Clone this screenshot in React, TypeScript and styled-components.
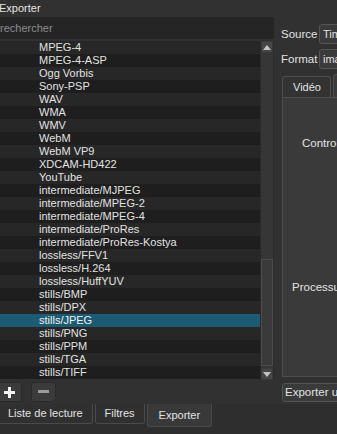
import React from 'react'
import styled, { createGlobalStyle, css } from 'styled-components'

const GlobalStyle = createGlobalStyle`
  html, body {
    margin: 0;
    padding: 0;
    background: #2f2f2f;
  }
  body {
    font-family: "Liberation Sans", Arial, sans-serif;
    font-size: 11px;
    color: #dcdcdc;
  }
`

const presets = [
  'MPEG-4',
  'MPEG-4-ASP',
  'Ogg Vorbis',
  'Sony-PSP',
  'WAV',
  'WMA',
  'WMV',
  'WebM',
  'WebM VP9',
  'XDCAM-HD422',
  'YouTube',
  'intermediate/MJPEG',
  'intermediate/MPEG-2',
  'intermediate/MPEG-4',
  'intermediate/ProRes',
  'intermediate/ProRes-Kostya',
  'lossless/FFV1',
  'lossless/H.264',
  'lossless/HuffYUV',
  'stills/BMP',
  'stills/DPX',
  'stills/JPEG',
  'stills/PNG',
  'stills/PPM',
  'stills/TGA',
  'stills/TIFF'
]

const Window = styled.div`
  width: 337px;
  height: 434px;
  overflow: hidden;
  display: flex;
  flex-direction: column;
  background: #313131;
`

const Main = styled.div`
  display: flex;
  height: 404px;
  flex-shrink: 0;
`

const LeftDock = styled.div`
  width: 276px;
  flex-shrink: 0;
  display: flex;
  flex-direction: column;
`

const DockTitle = styled.div`
  height: 17px;
  line-height: 16px;
  margin-left: -1px;
  color: #e4e4e4;
`

const SearchField = styled.div`
  height: 22px;
  line-height: 22px;
  margin-right: 2px;
  background: #252525;
  color: #8c8c8c;
  white-space: nowrap;
`

const ListView = styled.div`
  margin-top: 2px;
  height: 339px;
  width: 274px;
  display: flex;
`

const Rows = styled.div`
  width: 260px;
  display: flex;
  flex-direction: column;
`

const Row = styled.div<{ $odd: boolean; $selected: boolean }>`
  height: 13px;
  line-height: 13px;
  padding-left: 39px;
  white-space: nowrap;
  color: #e2e2e2;
  background: ${({ $odd }) => ($odd ? '#1e1e1e' : '#272727')};
  ${({ $selected }) =>
    $selected &&
    css`
      background: #1c5b74;
      color: #f0f0f0;
    `}
`

const ScrollBar = styled.div`
  width: 14px;
  display: flex;
  flex-direction: column;
  background: #363636;
  box-sizing: border-box;
  border-left: 1px solid #2a2a2a;
  border-right: 1px solid #2c2c2c;
`

const ArrowButton = styled.div`
  height: 12px;
  display: flex;
  align-items: center;
  justify-content: center;
  background: #464646;
  border: 1px solid #3a3a3a;
  box-sizing: border-box;
`

const Thumb = styled.div`
  margin-top: auto;
  height: 107px;
  margin-bottom: 2px;
  background: #3a3a3a;
  border: 1px solid #4c4c4c;
  box-sizing: border-box;
`

const ButtonRow = styled.div`
  height: 24px;
  padding-top: 2px;
  box-sizing: border-box;
  display: flex;
  gap: 9px;
`

const ToolButton = styled.div<{ $first?: boolean }>`
  width: 25px;
  height: 20px;
  margin-left: ${({ $first }) => ($first ? '-3px' : '0')};
  border-radius: 3px;
  background: #3b3b3b;
  border: 1px solid #2a2a2a;
  box-sizing: border-box;
  display: flex;
  align-items: center;
  justify-content: center;
`

const RightPanel = styled.div`
  flex: 1;
  min-width: 0;
  padding: 24px 0 0 5px;
  display: flex;
  flex-direction: column;
  white-space: nowrap;
`

const FormRow = styled.div`
  display: flex;
  align-items: center;
  height: 20px;
  margin-bottom: 5px;
`

const Label = styled.div`
  width: 38px;
  flex-shrink: 0;
  color: #e2e2e2;
  font-size: 11.5px;
`

const Combo = styled.div`
  width: 90px;
  flex-shrink: 0;
  height: 20px;
  line-height: 18px;
  padding-left: 3px;
  box-sizing: border-box;
  border-radius: 3px;
  background: #3a3a3a;
  border: 1px solid #555;
  color: #e2e2e2;
`

const TabRow = styled.div`
  display: flex;
  align-items: flex-end;
  height: 24px;
  margin-left: 1px;
  gap: 2px;
`

const TopTab = styled.div<{ $selected?: boolean }>`
  flex-shrink: 0;
  height: ${({ $selected }) => ($selected ? '24px' : '22px')};
  line-height: 21px;
  padding: 0 10px;
  box-sizing: border-box;
  border: 1px solid #4e4e4e;
  border-bottom: none;
  border-radius: 3px 3px 0 0;
  background: ${({ $selected }) => ($selected ? '#3b3b3b' : '#333')};
  color: #e2e2e2;
  width: ${({ $selected }) => ($selected ? '60px' : '49px')};
  text-align: center;
`

const TabPanel = styled.div`
  margin-left: 1px;
  height: 280px;
  width: 100px;
  margin-top: -1px;
  box-sizing: border-box;
  border: 1px solid #4e4e4e;
  background: #3a3a3a;
  display: flex;
  flex-direction: column;
`

const PanelLabel = styled.div<{ $indent: number; $top: number }>`
  margin-top: ${({ $top }) => $top}px;
  padding-left: ${({ $indent }) => $indent}px;
  height: 13px;
  line-height: 13px;
  color: #e2e2e2;
  font-size: 11.5px;
`

const ExportButton = styled.div`
  margin: 6px 0 0 1px;
  width: 100px;
  height: 19px;
  line-height: 17px;
  padding-left: 2px;
  box-sizing: border-box;
  border-radius: 3px;
  background: #3a3a3a;
  border: 1px solid #555;
  color: #e2e2e2;
  font-size: 11.5px;
`

const BottomBar = styled.div`
  height: 30px;
  flex-shrink: 0;
  display: flex;
  align-items: flex-start;
  gap: 2px;
  background: #2e2e2e;
`

const BottomTab = styled.div<{ $selected?: boolean; $first?: boolean }>`
  height: ${({ $selected }) => ($selected ? '23px' : '20px')};
  line-height: 18px;
  padding: ${({ $selected }) => ($selected ? '2px 11px 0' : '0 9px')};
  margin-left: ${({ $first }) => ($first ? '-2px' : '0')};
  box-sizing: border-box;
  border: 1px solid #4a4a4a;
  border-top: none;
  border-radius: 0 0 3px 3px;
  background: ${({ $selected }) => ($selected ? '#393939' : '#303030')};
  color: #e2e2e2;
  font-size: 11px;
  white-space: nowrap;
`

function Triangle({ up }: { up: boolean }) {
  return (
    <svg width="8" height="5" viewBox="0 0 8 5">
      <polygon points={up ? '0,5 8,5 4,0' : '0,0 8,0 4,5'} fill="#c4c4c4" />
    </svg>
  )
}

function PlusIcon() {
  return (
    <svg width="11" height="11" viewBox="0 0 11 11">
      <rect x="4" y="0" width="3" height="11" fill="#f2f2f2" />
      <rect x="0" y="4" width="11" height="3" fill="#f2f2f2" />
    </svg>
  )
}

function MinusIcon() {
  return (
    <svg width="11" height="4" viewBox="0 0 11 4">
      <rect x="0" y="0" width="11" height="3" fill="#9a9a9a" />
    </svg>
  )
}

export default function App() {
  return (
    <>
      <GlobalStyle />
      <Window>
        <Main>
          <LeftDock>
            <DockTitle>Exporter</DockTitle>
            <SearchField>rechercher</SearchField>
            <ListView>
              <Rows>
                {presets.map((name, i) => (
                  <Row key={name} $odd={i % 2 === 1} $selected={name === 'stills/JPEG'}>
                    {name}
                  </Row>
                ))}
              </Rows>
              <ScrollBar>
                <ArrowButton>
                  <Triangle up />
                </ArrowButton>
                <Thumb />
                <ArrowButton>
                  <Triangle up={false} />
                </ArrowButton>
              </ScrollBar>
            </ListView>
            <ButtonRow>
              <ToolButton $first>
                <PlusIcon />
              </ToolButton>
              <ToolButton>
                <MinusIcon />
              </ToolButton>
            </ButtonRow>
          </LeftDock>
          <RightPanel>
            <FormRow>
              <Label>Source</Label>
              <Combo>Timeline</Combo>
            </FormRow>
            <FormRow>
              <Label>Format</Label>
              <Combo>image2</Combo>
            </FormRow>
            <TabRow>
              <TopTab>Vidéo</TopTab>
              <TopTab $selected>Codec</TopTab>
            </TabRow>
            <TabPanel>
              <PanelLabel $indent={19} $top={39}>
                Controle de débit
              </PanelLabel>
              <PanelLabel $indent={9} $top={131}>
                Processus
              </PanelLabel>
            </TabPanel>
            <ExportButton>Exporter un fichier</ExportButton>
          </RightPanel>
        </Main>
        <BottomBar>
          <BottomTab $first>Liste de lecture</BottomTab>
          <BottomTab>Filtres</BottomTab>
          <BottomTab $selected>Exporter</BottomTab>
        </BottomBar>
      </Window>
    </>
  )
}
